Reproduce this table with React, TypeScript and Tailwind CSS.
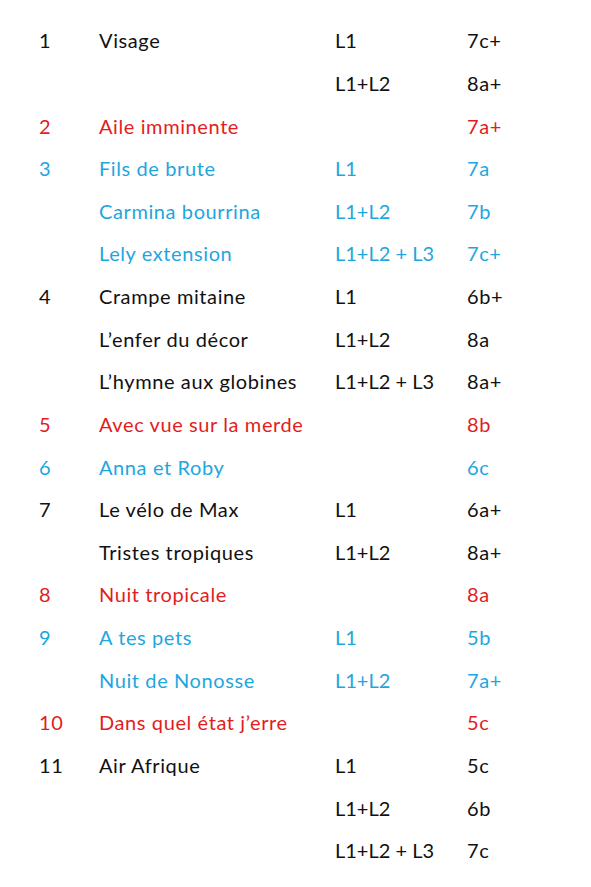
import React from "react";

type Row = { n?: string; name?: string; l?: string; g: string; c: "k" | "r" | "b" };

const rows: Row[] = [
  { n: "1", name: "Visage", l: "L1", g: "7c+", c: "k" },
  { l: "L1+L2", g: "8a+", c: "k" },
  { n: "2", name: "Aile imminente", g: "7a+", c: "r" },
  { n: "3", name: "Fils de brute", l: "L1", g: "7a", c: "b" },
  { name: "Carmina bourrina", l: "L1+L2", g: "7b", c: "b" },
  { name: "Lely extension", l: "L1+L2 + L3", g: "7c+", c: "b" },
  { n: "4", name: "Crampe mitaine", l: "L1", g: "6b+", c: "k" },
  { name: "L\u2019enfer du décor", l: "L1+L2", g: "8a", c: "k" },
  { name: "L\u2019hymne aux globines", l: "L1+L2 + L3", g: "8a+", c: "k" },
  { n: "5", name: "Avec vue sur la merde", g: "8b", c: "r" },
  { n: "6", name: "Anna et Roby", g: "6c", c: "b" },
  { n: "7", name: "Le vélo de Max", l: "L1", g: "6a+", c: "k" },
  { name: "Tristes tropiques", l: "L1+L2", g: "8a+", c: "k" },
  { n: "8", name: "Nuit tropicale", g: "8a", c: "r" },
  { n: "9", name: "A tes pets", l: "L1", g: "5b", c: "b" },
  { name: "Nuit de Nonosse", l: "L1+L2", g: "7a+", c: "b" },
  { n: "10", name: "Dans quel état j\u2019erre", g: "5c", c: "r" },
  { n: "11", name: "Air Afrique", l: "L1", g: "5c", c: "k" },
  { l: "L1+L2", g: "6b", c: "k" },
  { l: "L1+L2 + L3", g: "7c", c: "k" },
];

const colorClass = {
  k: "text-[#111111]",
  r: "text-[#e21d1d]",
  b: "text-[#1ea6de]",
};

export default function App() {
  return (
    <div className="w-[591px] h-[887px] bg-white pt-[19px] pl-[39px] font-['Lato','Liberation_Sans',sans-serif] text-[20px] tracking-[0.6px]">
      {rows.map((r, i) => (
        <div
          key={i}
          className={`grid grid-cols-[60px_236px_132px_80px] h-[42.63px] items-center ${colorClass[r.c]}`}
        >
          <span>{r.n ?? ""}</span>
          <span>{r.name ?? ""}</span>
          <span className="tracking-[0px]">{r.l ?? ""}</span>
          <span>{r.g}</span>
        </div>
      ))}
    </div>
  );
}
